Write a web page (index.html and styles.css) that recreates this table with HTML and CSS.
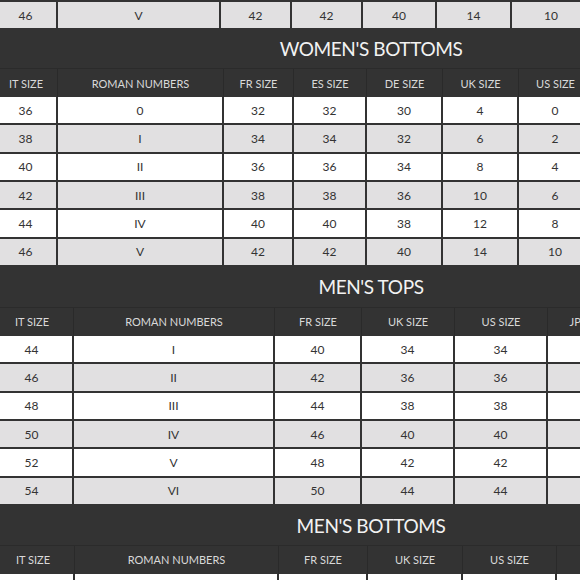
FILE: index.html
```html
<!DOCTYPE html>
<html lang="en">
<head>
<meta charset="utf-8">
<title>Size chart</title>
<link rel="stylesheet" href="styles.css">
</head>
<body>
<div class="page">
  <div class="tbl w-tops">
    <div class="row alt first"><div>46</div><div>V</div><div>42</div><div>42</div><div>40</div><div>14</div><div>10</div><div></div></div>
  </div>

  <section class="block">
    <h2 class="title">WOMEN'S BOTTOMS</h2>
    <div class="tbl w-bottoms">
      <div class="row head"><div>IT SIZE</div><div>ROMAN NUMBERS</div><div>FR SIZE</div><div>ES SIZE</div><div>DE SIZE</div><div>UK SIZE</div><div>US SIZE</div><div>JP SIZE</div></div>
      <div class="row"><div>36</div><div>0</div><div>32</div><div>32</div><div>30</div><div>4</div><div>0</div><div></div></div>
      <div class="row alt"><div>38</div><div>I</div><div>34</div><div>34</div><div>32</div><div>6</div><div>2</div><div></div></div>
      <div class="row"><div>40</div><div>II</div><div>36</div><div>36</div><div>34</div><div>8</div><div>4</div><div></div></div>
      <div class="row alt"><div>42</div><div>III</div><div>38</div><div>38</div><div>36</div><div>10</div><div>6</div><div></div></div>
      <div class="row"><div>44</div><div>IV</div><div>40</div><div>40</div><div>38</div><div>12</div><div>8</div><div></div></div>
      <div class="row alt"><div>46</div><div>V</div><div>42</div><div>42</div><div>40</div><div>14</div><div>10</div><div></div></div>
    </div>
  </section>

  <section class="block">
    <h2 class="title">MEN'S TOPS</h2>
    <div class="tbl m-tops">
      <div class="row head"><div>IT SIZE</div><div>ROMAN NUMBERS</div><div>FR SIZE</div><div>UK SIZE</div><div>US SIZE</div><div>JP SIZE</div></div>
      <div class="row"><div>44</div><div>I</div><div>40</div><div>34</div><div>34</div><div></div></div>
      <div class="row alt"><div>46</div><div>II</div><div>42</div><div>36</div><div>36</div><div></div></div>
      <div class="row"><div>48</div><div>III</div><div>44</div><div>38</div><div>38</div><div></div></div>
      <div class="row alt"><div>50</div><div>IV</div><div>46</div><div>40</div><div>40</div><div></div></div>
      <div class="row"><div>52</div><div>V</div><div>48</div><div>42</div><div>42</div><div></div></div>
      <div class="row alt"><div>54</div><div>VI</div><div>50</div><div>44</div><div>44</div><div></div></div>
    </div>
  </section>

  <section class="block">
    <h2 class="title short">MEN'S BOTTOMS</h2>
    <div class="tbl m-bottoms">
      <div class="row head"><div>IT SIZE</div><div>ROMAN NUMBERS</div><div>FR SIZE</div><div>UK SIZE</div><div>US SIZE</div><div>JP SIZE</div></div>
      <div class="row"><div></div><div></div><div></div><div></div><div></div><div></div></div>
    </div>
  </section>
</div>
</body>
</html>
```

FILE: styles.css
```css
* {
  box-sizing: border-box;
  margin: 0;
  padding: 0;
}

html,
body {
  width: 580px;
  height: 580px;
  overflow: hidden;
  background: #ffffff;
}

body {
  font-family: Lato, "Open Sans", "Liberation Sans", sans-serif;
  color: #333333;
}

.page {
  width: 742px;
}

.title {
  height: 40px;
  background: #333333;
  color: #f2f2f2;
  font-weight: 400;
  font-size: 19px;
  letter-spacing: -0.4px;
  display: flex;
  align-items: center;
  justify-content: center;
}

.title.short {
  height: 39px;
}

.row {
  display: grid;
  height: 28.33px;
  border-bottom: 2px solid #333333;
  background: #ffffff;
  font-size: 12px;
  color: #333333;
}

.row.alt {
  background: #e1e0e1;
}

.row.first {
  height: 28px;
  border-top: 2px solid #333333;
  border-bottom: 0;
}

.row > div {
  display: flex;
  align-items: center;
  justify-content: center;
  white-space: nowrap;
  border-right: 2px solid #333333;
}

.row.head {
  height: 29px;
  background: #333333;
  color: #d9d9d9;
  font-size: 11px;
  border-top: 1px solid #2b2b2b;
  border-bottom: 0;
}

.row.head > div {
  border-right: 1px solid #2a2a2a;
}

.w-tops {
  margin-left: -5px;
}

.w-tops .row {
  grid-template-columns: 63px 163px 71px 71px 74px 75px 80px 80px;
}

.w-bottoms {
  margin-left: -5px;
}

.w-bottoms .row {
  grid-template-columns: 63px 166px 70px 73px 76px 76px 74px 80px;
}

.m-tops {
  margin-left: -9px;
}

.m-tops .row {
  grid-template-columns: 83px 201px 87px 93px 93px 80px;
}

.m-bottoms {
  margin-left: -8px;
}

.m-bottoms .row {
  grid-template-columns: 83px 204px 89px 95px 94px 92px;
}
```
